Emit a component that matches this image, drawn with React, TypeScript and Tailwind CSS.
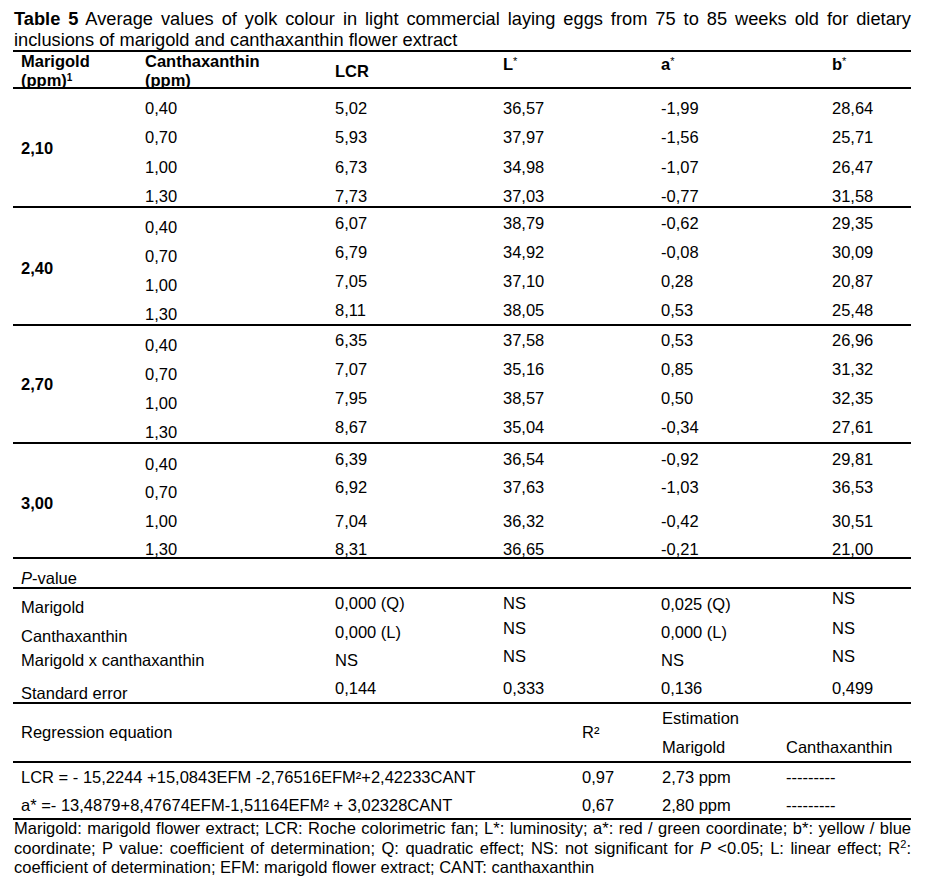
import React from "react";

type Row = { c: string; v: string[]; pt: string };
type Group = { marigold: string; markPt: string; canthaPt: string; rowH: string; rows: Row[] };

const groups: Group[] = [
  {
    marigold: "2,10",
    markPt: "pt-0",
    canthaPt: "pt-[10px]",
    rowH: "h-[29.25px]",
    rows: [
      { c: "0,40", v: ["5,02", "36,57", "-1,99", "28,64"], pt: "pt-[10px]" },
      { c: "0,70", v: ["5,93", "37,97", "-1,56", "25,71"], pt: "pt-[10px]" },
      { c: "1,00", v: ["6,73", "34,98", "-1,07", "26,47"], pt: "pt-[10px]" },
      { c: "1,30", v: ["7,73", "37,03", "-0,77", "31,58"], pt: "pt-[10px]" },
    ],
  },
  {
    marigold: "2,40",
    markPt: "pt-[4px]",
    canthaPt: "pt-[10px]",
    rowH: "h-[29px]",
    rows: [
      { c: "0,40", v: ["6,07", "38,79", "-0,62", "29,35"], pt: "pt-[6px]" },
      { c: "0,70", v: ["6,79", "34,92", "-0,08", "30,09"], pt: "pt-[6px]" },
      { c: "1,00", v: ["7,05", "37,10", "0,28", "20,87"], pt: "pt-[6px]" },
      { c: "1,30", v: ["8,11", "38,05", "0,53", "25,48"], pt: "pt-[6px]" },
    ],
  },
  {
    marigold: "2,70",
    markPt: "pt-0",
    canthaPt: "pt-[10px]",
    rowH: "h-[29px]",
    rows: [
      { c: "0,40", v: ["6,35", "37,58", "0,53", "26,96"], pt: "pt-[5px]" },
      { c: "0,70", v: ["7,07", "35,16", "0,85", "31,32"], pt: "pt-[5px]" },
      { c: "1,00", v: ["7,95", "38,57", "0,50", "32,35"], pt: "pt-[5px]" },
      { c: "1,30", v: ["8,67", "35,04", "-0,34", "27,61"], pt: "pt-[5px]" },
    ],
  },
  {
    marigold: "3,00",
    markPt: "pt-[5px]",
    canthaPt: "pt-[11px]",
    rowH: "h-[28.25px]",
    rows: [
      { c: "0,40", v: ["6,39", "36,54", "-0,92", "29,81"], pt: "pt-[6px]" },
      { c: "0,70", v: ["6,92", "37,63", "-1,03", "36,53"], pt: "pt-[6px]" },
      { c: "1,00", v: ["7,04", "36,32", "-0,42", "30,51"], pt: "pt-[11px]" },
      { c: "1,30", v: ["8,31", "36,65", "-0,21", "21,00"], pt: "pt-[11px]" },
    ],
  },
];

// label, then LCR, L*, a*, b*; each cell carries its own top offset
const pRows = [
  { h: "h-[30px]", cells: [["Marigold", "pt-[9px]"], ["0,000 (Q)", "pt-[5px]"], ["NS", "pt-[5px]"], ["0,025 (Q)", "pt-[6px]"], ["NS", "pt-0"]] },
  { h: "h-[26px]", cells: [["Canthaxanthin", "pt-[8px]"], ["0,000 (L)", "pt-[4px]"], ["NS", "pt-0"], ["0,000 (L)", "pt-[4px]"], ["NS", "pt-0"]] },
  { h: "h-[26px]", cells: [["Marigold x canthaxanthin", "pt-[6px]"], ["NS", "pt-[6px]"], ["NS", "pt-[2px]"], ["NS", "pt-[6px]"], ["NS", "pt-[2px]"]] },
  { h: "h-[31px]", cells: [["Standard error", "pt-[13px]"], ["0,144", "pt-[8px]"], ["0,333", "pt-[8px]"], ["0,136", "pt-[8px]"], ["0,499", "pt-[8px]"]] },
];

const regRows = [
  { eq: "LCR = - 15,2244 +15,0843EFM -2,76516EFM²+2,42233CANT", r2: "0,97", m: "2,73 ppm", h: "h-[28px]" },
  { eq: "a* =- 13,4879+8,47674EFM-1,51164EFM² + 3,02328CANT", r2: "0,67", m: "2,80 ppm", h: "h-[27px]" },
];

function Rule() {
  return <div className="h-[2px] bg-black" />;
}

export default function App() {
  return (
    <div className="w-[930px] h-[891px] bg-white text-black font-['Liberation_Sans',Arial,sans-serif] overflow-hidden">
      <div className="w-[898px] ml-[13px]">
        <p className="h-[50px] pt-[8px] pl-[1px] text-[18.25px] leading-[21px] text-justify">
          <b>Table 5</b> Average values of yolk colour in light commercial laying eggs from 75 to 85 weeks old for dietary inclusions of marigold and canthaxanthin flower extract
        </p>

        <div className="text-[16.5px] leading-[18px]">
          <Rule />
          <div className="h-[35px] pl-[8px] grid grid-cols-[124px_190px_168px_158px_171px_79px] font-bold">
            <div className="leading-[19px]">
              Marigold
              <br />
              (ppm)<sup className="text-[10px]">1</sup>
            </div>
            <div className="leading-[19px]">
              Canthaxanthin
              <br />
              (ppm)
            </div>
            <div className="pt-[10px]">LCR</div>
            <div className="pt-[3px]">L<sup className="text-[11px] font-normal">*</sup></div>
            <div className="pt-[3px]">a<sup className="text-[11px] font-normal">*</sup></div>
            <div className="pt-[3px]">b<sup className="text-[11px] font-normal">*</sup></div>
          </div>
          <Rule />

          {groups.map((g, gi) => (
            <React.Fragment key={g.marigold}>
              <div className="flex pl-[8px]">
                <div className={`w-[124px] flex items-center font-bold ${g.markPt}`}>{g.marigold}</div>
                <div className="flex flex-col">
                  {g.rows.map((r) => (
                    <div key={r.c} className={`grid grid-cols-[190px_168px_158px_171px_79px] ${g.rowH}`}>
                      <div className={g.canthaPt}>{r.c}</div>
                      {r.v.map((v, i) => (
                        <div key={i} className={r.pt}>
                          {v}
                        </div>
                      ))}
                    </div>
                  ))}
                </div>
              </div>
              {gi < groups.length - 1 && <Rule />}
            </React.Fragment>
          ))}
          <Rule />

          <div className="h-[28px] pl-[8px] pt-[10px]">
            <i>P</i>-value
          </div>
          <Rule />

          <div className="pl-[8px]">
            {pRows.map((r) => (
              <div key={r.cells[0][0]} className={`grid grid-cols-[314px_168px_158px_171px_79px] ${r.h}`}>
                {r.cells.map(([text, pt], i) => (
                  <div key={i} className={pt}>
                    {text}
                  </div>
                ))}
              </div>
            ))}
          </div>
          <Rule />

          <div className="h-[57px] pl-[8px] grid grid-cols-[561px_80px_124px_125px]">
            <div className="pt-[19px]">Regression equation</div>
            <div className="pt-[19px]">R²</div>
            <div className="pt-[5px] flex flex-col gap-[11px]">
              <span>Estimation</span>
              <span>Marigold</span>
            </div>
            <div className="pt-[34px]">Canthaxanthin</div>
          </div>
          <Rule />

          <div className="pl-[8px]">
            {regRows.map((r) => (
              <div key={r.r2} className={`grid grid-cols-[561px_80px_124px_125px] ${r.h} pt-[5px]`}>
                <div>{r.eq}</div>
                <div>{r.r2}</div>
                <div>{r.m}</div>
                <div>---------</div>
              </div>
            ))}
          </div>
          <Rule />

          <p className="-mt-[1px] pl-[1px] leading-[19.5px] text-justify">
            Marigold: marigold flower extract; LCR: Roche colorimetric fan; L*: luminosity; a*: red / green coordinate; b*: yellow / blue coordinate; P value: coefficient of determination; Q: quadratic effect; NS: not significant for <i>P</i> &lt;0.05; L: linear effect; R<sup className="text-[11px]">2</sup>: coefficient of determination; EFM: marigold flower extract; CANT: canthaxanthin
          </p>
        </div>
      </div>
    </div>
  );
}
